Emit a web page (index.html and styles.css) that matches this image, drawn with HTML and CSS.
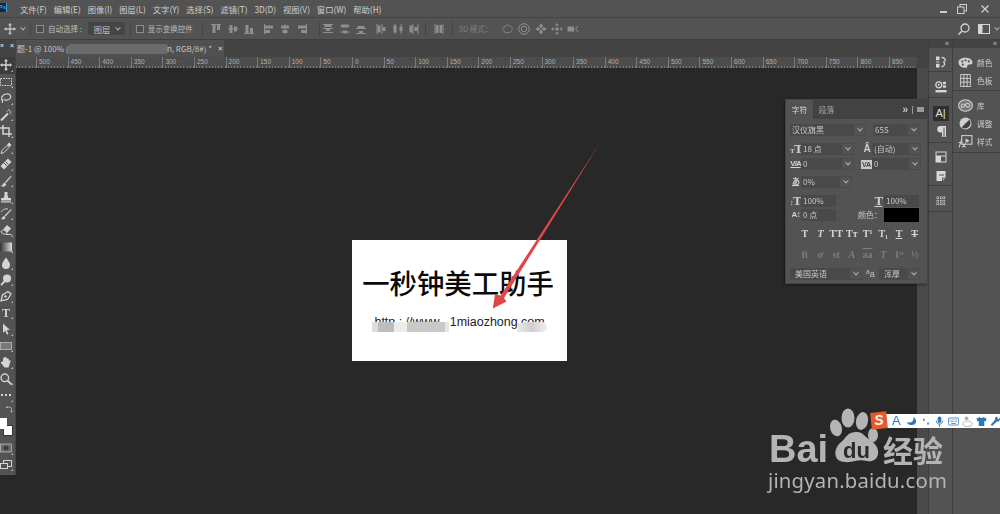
FILE: index.html
```html
<!DOCTYPE html>
<html lang="zh-CN">
<head>
<meta charset="utf-8">
<title>Photoshop</title>
<link rel="stylesheet" href="styles.css">
</head>
<body>
<svg class="sprite" aria-hidden="true">
  <defs>
    <symbol id="move" viewBox="0 0 12 12"><path d="M6 0l2 2.200H6.700v3.100h3.100V4L12 6 9.800 8V6.700H6.700v3.100H8L6 12 4 9.800h1.300V6.700H2.200V8L0 6l2.200-2v1.300h3.100V2.200H4z" fill="currentColor"/></symbol>
    <symbol id="marquee" viewBox="0 0 12 12"><rect x=".5" y="2.500" width="11" height="7" fill="none" stroke="currentColor" stroke-dasharray="1.600 1"/></symbol>
    <symbol id="lasso" viewBox="0 0 12 12"><path d="M2.500 9.500C.5 7 1.500 2.500 6.500 2c4-.4 5 2.500 3.500 4.500S5 8.500 3.500 7.500" fill="none" stroke="currentColor" stroke-width="1.200"/><path d="M2.500 7.500v3.500" stroke="currentColor"/></symbol>
    <symbol id="wand" viewBox="0 0 12 12"><path d="M1 11.500L8 4.500" stroke="currentColor" stroke-width="2"/><path d="M9 0v2M11.500 3H9.500M11 5.500l-1-1M6.500 1.500l1 1" stroke="currentColor"/></symbol>
    <symbol id="crop" viewBox="0 0 12 12"><path d="M3 0v9h9M0 3h9v9" fill="none" stroke="currentColor" stroke-width="1.500"/></symbol>
    <symbol id="dropper" viewBox="0 0 12 12"><path d="M1 11.500l1-3L7 3.500l2 2-5 5z" fill="none" stroke="currentColor"/><path d="M7 2.500l2-2 2.500 2.500-2 2z" fill="currentColor"/></symbol>
    <symbol id="heal" viewBox="0 0 12 12"><path d="M.5 8l7.500-7.500 3.500 3.500L4 11.500z" fill="currentColor"/><path d="M4 5l3 3M5.500 3.500l3 3" stroke="#535353"/></symbol>
    <symbol id="brush" viewBox="0 0 12 12"><path d="M11 .5L5 7l1 1 5.500-6.500z" fill="currentColor"/><path d="M4.500 7.500C2.500 8 3.500 10.500 .5 11c3.500 1.500 6-.5 5.500-2z" fill="currentColor"/></symbol>
    <symbol id="stamp" viewBox="0 0 12 12"><path d="M4.500 1h3v3.500L8.500 7h2.500v2.500H1V7h2.500l1-2.500z" fill="currentColor"/><rect x="1" y="10.300" width="10" height="1.200" fill="currentColor"/></symbol>
    <symbol id="history" viewBox="0 0 12 12"><path d="M11 1L4.500 7.500l1 1L11.500 2z" fill="currentColor"/><path d="M4 8c-2 .5-1 2.500-3.500 3 3 1 5 0 5-1.700z" fill="currentColor"/><path d="M1 4c2-3 5-3.500 7-3" fill="none" stroke="currentColor"/></symbol>
    <symbol id="eraser" viewBox="0 0 12 12"><path d="M7 1l4 3.500-3.500 4L3.500 5z" fill="currentColor"/><path d="M3 5.500L.8 8l2.500 2h2.500l1.500-1.500z" fill="none" stroke="currentColor"/><path d="M6 10.500h5.500" stroke="currentColor"/></symbol>
    <symbol id="gradient" viewBox="0 0 12 12"><defs><linearGradient id="g1"><stop offset="0" stop-color="#333"/><stop offset="1" stop-color="#ddd"/></linearGradient></defs><rect y="1.500" width="12" height="9" fill="url(#g1)"/></symbol>
    <symbol id="drop" viewBox="0 0 12 12"><path d="M6 .5C8 3.500 10 5.500 10 8a4 4 0 0 1-8 0C2 5.500 4 3.500 6 .5z" fill="currentColor"/></symbol>
    <symbol id="dodge" viewBox="0 0 12 12"><circle cx="7" cy="4.500" r="4" fill="currentColor"/><path d="M4.500 7.500L1 11" stroke="currentColor" stroke-width="1.800"/></symbol>
    <symbol id="pen" viewBox="0 0 12 12"><path d="M1 11l1.500-6L8 1.500 11 4 7.500 9.500z" fill="none" stroke="currentColor" stroke-width="1.300"/><circle cx="5.500" cy="6.500" r="1.200" fill="currentColor"/></symbol>
    <symbol id="path" viewBox="0 0 12 12"><path d="M3 .5l7 6.500H6.800L8.500 11l-1.500.7L5.200 7.800 3 10z" fill="currentColor"/></symbol>
    <symbol id="shape" viewBox="0 0 12 12"><rect x=".5" y="2.500" width="11" height="7" fill="#777" stroke="#aaa"/></symbol>
    <symbol id="hand" viewBox="0 0 12 12"><path d="M3 5V2.500a.8.8 0 0 1 1.300-.3V1.300a.8.8 0 0 1 1.500 0V2a.8.8 0 0 1 1.500 0v1a.8.8 0 0 1 1.500 0v2l.7-.7c.7-.5 1.400.2 1 .9L8.500 11.500H4.500L1 7c-.5-.8.500-1.500 1.200-.9z" fill="currentColor"/></symbol>
    <symbol id="zoom" viewBox="0 0 12 12"><circle cx="4.800" cy="4.800" r="3.800" fill="none" stroke="currentColor" stroke-width="1.300"/><path d="M7.500 7.500l4 4" stroke="currentColor" stroke-width="1.800"/></symbol>
    <symbol id="dots" viewBox="0 0 12 12"><path d="M1 6h2M5 6h2M9 6h2" stroke="currentColor" stroke-width="1.800"/></symbol>
    <symbol id="swap" viewBox="0 0 12 12"><path d="M1 2h5.500a3 3 0 0 1 3 3v4" fill="none" stroke="currentColor"/><path d="M2.500 0L0 2l2.500 2zM7.500 8.500L9.500 11l2-2.500z" fill="currentColor"/></symbol>
    <symbol id="mask" viewBox="0 0 12 12"><rect x=".5" y="2" width="11" height="8" fill="#6a6a6a" stroke="currentColor" stroke-width=".6"/><circle cx="6" cy="6" r="2.500" fill="#3d3d3d"/></symbol>
    <symbol id="screen" viewBox="0 0 12 12"><rect x="3.500" y="1.500" width="8" height="6" fill="none" stroke="currentColor"/><rect x=".5" y="4.500" width="7" height="5" fill="#535353" stroke="currentColor"/></symbol>
    <symbol id="a-top" viewBox="0 0 12 12"><path d="M1 1.500h10" stroke="currentColor"/><rect x="2.500" y="2" width="3" height="8" fill="currentColor"/><rect x="7" y="2" width="3" height="5" fill="currentColor"/></symbol>
    <symbol id="a-mid" viewBox="0 0 12 12"><path d="M1 6h10" stroke="currentColor"/><rect x="2.500" y="2" width="3" height="8" fill="currentColor"/><rect x="7" y="3.500" width="3" height="5" fill="currentColor"/></symbol>
    <symbol id="a-bot" viewBox="0 0 12 12"><path d="M1 10.500h10" stroke="currentColor"/><rect x="2.500" y="2" width="3" height="8" fill="currentColor"/><rect x="7" y="5" width="3" height="5" fill="currentColor"/></symbol>
    <symbol id="a-left" viewBox="0 0 12 12"><path d="M1.500 1v10" stroke="currentColor"/><rect x="2" y="2.500" width="8" height="3" fill="currentColor"/><rect x="2" y="7" width="5" height="3" fill="currentColor"/></symbol>
    <symbol id="a-cen" viewBox="0 0 12 12"><path d="M6 1v10" stroke="currentColor"/><rect x="2" y="2.500" width="8" height="3" fill="currentColor"/><rect x="3.500" y="7" width="5" height="3" fill="currentColor"/></symbol>
    <symbol id="a-right" viewBox="0 0 12 12"><path d="M10.500 1v10" stroke="currentColor"/><rect x="2" y="2.500" width="8" height="3" fill="currentColor"/><rect x="5" y="7" width="5" height="3" fill="currentColor"/></symbol>
    <symbol id="d-top" viewBox="0 0 12 12"><path d="M1 1.500h10M1 5.500h10M1 9.500h10" stroke="currentColor"/><rect x="2.500" y="2" width="7" height="2" fill="currentColor"/><rect x="4" y="6" width="4" height="2" fill="currentColor"/></symbol>
    <symbol id="d-mid" viewBox="0 0 12 12"><path d="M1 3h10M1 9h10" stroke="currentColor"/><rect x="2.500" y="1.500" width="7" height="3" fill="currentColor"/><rect x="4" y="7.500" width="4" height="3" fill="currentColor"/></symbol>
    <symbol id="d-bot" viewBox="0 0 12 12"><path d="M1 5.500h10M1 10.500h10" stroke="currentColor"/><rect x="2.500" y="3" width="7" height="2" fill="currentColor"/><rect x="4" y="8" width="4" height="2" fill="currentColor"/></symbol>
    <symbol id="d-l" viewBox="0 0 12 12"><path d="M2 1v10M7 1v10" stroke="currentColor"/><rect x="2.500" y="2.500" width="3" height="7" fill="currentColor"/><rect x="7.500" y="4" width="3" height="4" fill="currentColor"/></symbol>
    <symbol id="d-c" viewBox="0 0 12 12"><path d="M3 1v10M9 1v10" stroke="currentColor"/><rect x="1.500" y="2.500" width="3" height="7" fill="currentColor"/><rect x="7.500" y="4" width="3" height="4" fill="currentColor"/></symbol>
    <symbol id="d-r" viewBox="0 0 12 12"><path d="M5 1v10M10 1v10" stroke="currentColor"/><rect x="1.500" y="2.500" width="3" height="7" fill="currentColor"/><rect x="6.500" y="4" width="3" height="4" fill="currentColor"/></symbol>
    <symbol id="d-v" viewBox="0 0 12 12"><path d="M2 1v10M10 1v10" stroke="currentColor"/><rect x="3" y="2" width="2.500" height="8" fill="currentColor"/><rect x="6.500" y="2" width="2.500" height="8" fill="currentColor"/></symbol>
    <symbol id="orbit" viewBox="0 0 14 12"><path d="M3 8c-3-1-3-4 0-4 .5-3 5-3.500 6-1 3 0 4 2.500 2 4" fill="none" stroke="currentColor"/><path d="M2 9c3 2 7 2 10-1" fill="none" stroke="currentColor"/></symbol>
    <symbol id="roll" viewBox="0 0 12 12"><circle cx="6" cy="6" r="5.300" fill="none" stroke="currentColor"/><circle cx="6" cy="6" r="2.800" fill="none" stroke="currentColor"/></symbol>
    <symbol id="pan3d" viewBox="0 0 12 12"><path d="M6 .5L8 3 6 5.500 4 3zM6 6.500L8 9l-2 2.500L4 9zM.5 6L3 4l2.500 2L3 8zM6.500 6L9 4l2.500 2L9 8z" fill="currentColor"/></symbol>
    <symbol id="slide" viewBox="0 0 12 12"><path d="M6 0l2 2.500H4zM6 12L4 9.500h4zM0 6l2.500-2v4zM12 6L9.500 8V4z" fill="currentColor"/><circle cx="6" cy="6" r="1.800" fill="currentColor"/></symbol>
    <symbol id="cam" viewBox="0 0 12 12"><rect x=".5" y="3.500" width="6.500" height="5" fill="currentColor"/><path d="M11 3L8.500 6l2.500 3" fill="none" stroke="currentColor"/></symbol>
    <symbol id="search" viewBox="0 0 12 12"><circle cx="7" cy="5" r="4" fill="none" stroke="currentColor" stroke-width="1.300"/><path d="M4 8l-3.500 3.500" stroke="currentColor" stroke-width="1.500"/></symbol>
    <symbol id="layout" viewBox="0 0 12 12"><rect x=".5" y="1.500" width="11" height="9" fill="none" stroke="currentColor"/><rect x="1" y="2" width="3.500" height="8" fill="currentColor"/></symbol>
    <symbol id="minimize" viewBox="0 0 12 12"><rect x="2" y="8" width="7" height="2" fill="currentColor"/></symbol>
    <symbol id="restore" viewBox="0 0 12 12"><rect x="4" y="1.500" width="6.500" height="6.500" fill="none" stroke="currentColor"/><rect x="1.500" y="4" width="6.500" height="6.500" fill="#535353" stroke="currentColor"/></symbol>
    <symbol id="close" viewBox="0 0 12 12"><path d="M2.500 2.500l7 7M9.500 2.500l-7 7" stroke="currentColor" stroke-width="1.300"/></symbol>
    <symbol id="d-hist" viewBox="0 0 12 12"><rect x="1" y=".5" width="3.500" height="3.500" fill="currentColor"/><rect x="1" y="4.500" width="3.500" height="3" fill="#8a8a8a"/><rect x="1" y="8" width="3.500" height="3.500" fill="currentColor"/><path d="M6.500 1.500c3.500 0 4.500 2 3 4.200M8 5.800c2.500 1 2.300 4-1.500 5" fill="none" stroke="currentColor" stroke-width="1.300"/></symbol>
    <symbol id="d-info" viewBox="0 0 12 12"><circle cx="3.800" cy="3.800" r="3" fill="none" stroke="currentColor" stroke-width="1.300"/><circle cx="3.800" cy="3.800" r="1" fill="currentColor"/><rect x="8" y=".8" width="3" height="2.400" fill="currentColor"/><rect x="8" y="4.300" width="3" height="2.400" fill="currentColor"/><rect x=".5" y="9" width="11" height="2.400" fill="currentColor"/></symbol>
    <symbol id="d-para" viewBox="0 0 12 12"><path d="M11 1H5.500a3 3 0 0 0 0 6.500H7V12h1.500V2.500H9.500V12H11z" fill="currentColor"/></symbol>
    <symbol id="d-grid" viewBox="0 0 12 12"><rect x="1" y="1" width="10" height="10" fill="none" stroke="currentColor"/><path d="M1 5h10" stroke="currentColor"/><rect x="1" y="5" width="5" height="6" fill="currentColor"/></symbol>
    <symbol id="d-page" viewBox="0 0 12 12"><path d="M1.500 1h9v7L7.500 11h-6z" fill="currentColor"/><path d="M4 5h5M7.500 11V8H10.500" fill="none" stroke="#535353"/></symbol>
    <symbol id="d-net" viewBox="0 0 12 12"><path d="M1 3h10M1 6h10M1 9h10M3 1v10M6 1v10M9 1v10" stroke="currentColor" stroke-dasharray="1.200 .8"/></symbol>
    <symbol id="palette" viewBox="0 0 14 12"><path d="M7 1.500c4 0 6.500 2 6.500 4.500s-2.500 1.500-4 2 0 3-2.500 3C3.500 11 .5 9 .5 6S3 1.500 7 1.500z" fill="currentColor"/><circle cx="4" cy="5" r="1" fill="#535353"/><circle cx="7" cy="4" r="1" fill="#535353"/><circle cx="10" cy="5" r="1" fill="#535353"/><circle cx="4.500" cy="8" r="1" fill="#535353"/></symbol>
    <symbol id="swatches" viewBox="0 0 12 12"><path d="M1.500 .5h9v11h-9zM4.500.5v11M7.500.5v11M1.500 4h9M1.500 7.500h9" fill="none" stroke="currentColor" stroke-width=".9"/></symbol>
    <symbol id="cc" viewBox="0 0 14 12"><ellipse cx="7" cy="6" rx="6.500" ry="5.300" fill="#777" stroke="currentColor"/><path d="M3 7c0-3 3-3 4-1s4 2 4 0-3-3-4-1-4 4-4 2z" fill="none" stroke="currentColor"/></symbol>
    <symbol id="adjust" viewBox="0 0 12 12"><circle cx="6" cy="6" r="5.500" fill="currentColor"/><path d="M9.500 2.500A5 5 0 0 1 2.500 9.500z" fill="#3f3f3f"/></symbol>
    <symbol id="fx" viewBox="0 0 14 12"><rect x="3.500" y=".5" width="9.500" height="8" fill="none" stroke="currentColor"/><path d="M7 3l4 2.500-4 2z" fill="currentColor"/><path d="M1 11.500L3.500 4M.5 7H4M4 8l3 3.500M7 8l-3 3.500" stroke="currentColor"/></symbol>
    <symbol id="moon" viewBox="0 0 12 12"><path d="M8 1c1 4-2 7-7 6 2 4 10 4 10-1 0-2-1-4-3-5z" fill="currentColor"/></symbol>
    <symbol id="commas" viewBox="0 0 12 12"><path d="M3.500 3a1.200 1.200 0 1 1 0 2.200zM8 7a1.200 1.200 0 1 1 0 2.200z" fill="currentColor"/></symbol>
    <symbol id="mic" viewBox="0 0 12 12"><rect x="4" y=".5" width="4" height="7" rx="2" fill="currentColor"/><path d="M2.500 5c0 5 7 5 7 0M6 9v3" fill="none" stroke="currentColor"/></symbol>
    <symbol id="keys" viewBox="0 0 14 12"><rect x=".5" y="1.500" width="13" height="9" rx="1" fill="none" stroke="currentColor"/><path d="M2 4h10M2 6h10" stroke="currentColor" stroke-dasharray="1 .7"/><path d="M4 8.500h6" stroke="currentColor"/></symbol>
    <symbol id="person" viewBox="0 0 12 12"><circle cx="5" cy="2.500" r="2" fill="currentColor"/><ellipse cx="6" cy="8.500" rx="5" ry="3" fill="none" stroke="currentColor"/></symbol>
    <symbol id="shirt" viewBox="0 0 12 12"><path d="M4 1L.5 3l1 3 1.500-.5V11h6V5.500l1.500.5 1-3L8 1C7.500 2.500 4.500 2.500 4 1z" fill="currentColor"/></symbol>
    <symbol id="wrench" viewBox="0 0 12 12"><path d="M11 1.500L9 3.500 8 3 8.500 1C6.500.3 5 2 5.500 4L.8 9.500l1.500 1.500L7.500 6c2 .5 4-1.500 3.500-4.500z" fill="currentColor"/></symbol>
  </defs>
</svg>

<div class="app">
  <header class="menubar">
    <span class="ps-logo">Ps</span>
    <nav class="menu">
      <span>文件(F)</span><span>编辑(E)</span><span>图像(I)</span><span>图层(L)</span><span>文字(Y)</span><span>选择(S)</span><span>滤镜(T)</span><span>3D(D)</span><span>视图(V)</span><span>窗口(W)</span><span>帮助(H)</span>
    </nav>
    <div class="winctl">
      <svg class="wbtn"><use href="#minimize"/></svg>
      <svg class="wbtn"><use href="#restore"/></svg>
      <svg class="wbtn wclose"><use href="#close"/></svg>
    </div>
  </header>

  <div class="optbar">
    <svg class="opt-move"><use href="#move"/></svg>
    <i class="chev opt-chev"></i>
    <i class="vsep"></i>
    <i class="check"></i>
    <span class="opt-label">自动选择 :</span>
    <div class="opt-combo"><span>图层</span><i class="chev"></i></div>
    <i class="vsep sep-b"></i>
    <i class="check"></i>
    <span class="opt-label">显示变换控件</span>
    <i class="vsep sep-c"></i>
    <div class="ogroup g1">
      <svg><use href="#a-top"/></svg><svg><use href="#a-mid"/></svg><svg><use href="#a-bot"/></svg>
      <svg class="gapl"><use href="#a-left"/></svg><svg><use href="#a-cen"/></svg><svg><use href="#a-right"/></svg>
    </div>
    <i class="vsep sep-d"></i>
    <div class="ogroup">
      <svg><use href="#d-top"/></svg><svg><use href="#d-mid"/></svg><svg><use href="#d-bot"/></svg>
      <svg class="gapl"><use href="#d-l"/></svg><svg><use href="#d-c"/></svg><svg><use href="#d-r"/></svg>
    </div>
    <i class="vsep sep-e"></i>
    <div class="ogroup"><svg><use href="#d-v"/></svg></div>
    <i class="vsep sep-f"></i>
    <span class="mode3d">3D 模式：</span>
    <div class="ogroup g3d">
      <svg><use href="#orbit"/></svg><svg><use href="#roll"/></svg><svg><use href="#pan3d"/></svg><svg><use href="#slide"/></svg><svg><use href="#cam"/></svg>
    </div>
    <div class="opt-right">
      <svg class="r-search"><use href="#search"/></svg>
      <svg class="r-layout"><use href="#layout"/></svg>
      <i class="chev"></i>
    </div>
  </div>

  <div class="workspace">
    <aside class="toolcol">
      <div class="toolbox">
        <div class="tool-head"><span>»</span><span>×</span></div>
        <div class="tool active"><svg><use href="#move"/></svg></div>
        <div class="tool"><svg><use href="#marquee"/></svg></div>
        <div class="tool"><svg><use href="#lasso"/></svg></div>
        <div class="tool"><svg><use href="#wand"/></svg></div>
        <div class="tool"><svg><use href="#crop"/></svg></div>
        <div class="tool"><svg><use href="#dropper"/></svg></div>
        <div class="tool"><svg><use href="#heal"/></svg></div>
        <div class="tool"><svg><use href="#brush"/></svg></div>
        <div class="tool"><svg><use href="#stamp"/></svg></div>
        <div class="tool"><svg><use href="#history"/></svg></div>
        <div class="tool"><svg><use href="#eraser"/></svg></div>
        <div class="tool"><svg><use href="#gradient"/></svg></div>
        <div class="tool"><svg><use href="#drop"/></svg></div>
        <div class="tool"><svg><use href="#dodge"/></svg></div>
        <div class="tool"><svg><use href="#pen"/></svg></div>
        <div class="tool tool-t">T</div>
        <div class="tool"><svg><use href="#path"/></svg></div>
        <div class="tool"><svg><use href="#shape"/></svg></div>
        <div class="tool"><svg><use href="#hand"/></svg></div>
        <div class="tool"><svg><use href="#zoom"/></svg></div>
        <div class="tool"><svg><use href="#dots"/></svg></div>
        <div class="colors"><svg class="col-swap"><use href="#swap"/></svg><i class="col-fg"></i><i class="col-bg"></i></div>
        <div class="tool"><svg><use href="#mask"/></svg></div>
        <div class="tool"><svg><use href="#screen"/></svg></div>
      </div>
    </aside>

    <main class="center">
      <div class="tabbar">
        <div class="doctab">
          <span>题-1 @ 100% (I</span><i class="tab-blur"></i><span>n, RGB/8#) *</span><span class="tab-x">×</span>
        </div>
      </div>
      <div class="ruler">
        <span>500</span><span>450</span><span>400</span><span>350</span><span>300</span><span>250</span><span>200</span><span>150</span><span>100</span><span>50</span><span>0</span><span>50</span><span>100</span><span>150</span><span>200</span><span>250</span><span>300</span><span>350</span><span>400</span><span>450</span><span>500</span><span>550</span><span>600</span><span>650</span><span>700</span><span>750</span><span>800</span><span>850</span>
      </div>
      <div class="stage">
        <div class="doc">
          <div class="doc-title">一秒钟美工助手</div>
          <div class="doc-url">http : //www . 1miaozhong.com</div>
          <i class="mosaic m1"></i><i class="mosaic m2"></i>
        </div>
        <svg class="arrow" viewBox="16 68 901 446">
          <path d="M600 143L504 298 506.500 301.500 492.800 308.500 495 294.500 500.500 295.500z" fill="#e04646"/>
        </svg>
      </div>
    </main>

    <div class="gutter"></div>

    <aside class="dock dock-a">
      <div class="dock-head">«</div>
      <div class="dock-sec sec0"><svg><use href="#d-hist"/></svg></div>
      <div class="dock-sec sec1"><svg><use href="#d-info"/></svg></div>
      <div class="dock-sec sec2"><div class="dock-a-btn">A|</div><svg><use href="#d-para"/></svg></div>
      <div class="dock-sec sec3"><svg><use href="#d-grid"/></svg><svg><use href="#d-page"/></svg></div>
      <div class="dock-sec sec4"><svg><use href="#d-net"/></svg></div>
    </aside>

    <aside class="dock dock-b">
      <div class="dock-head">«</div>
      <div class="dock-group grp1">
        <div class="dock-item"><svg><use href="#palette"/></svg><span>颜色</span></div>
        <div class="dock-item"><svg><use href="#swatches"/></svg><span>色板</span></div>
      </div>
      <div class="dock-group grp2">
        <div class="dock-item"><svg><use href="#cc"/></svg><span>库</span></div>
        <div class="dock-item"><svg><use href="#adjust"/></svg><span>调整</span></div>
        <div class="dock-item"><svg><use href="#fx"/></svg><span>样式</span></div>
      </div>
    </aside>
  </div>

  <section class="charpanel">
    <div class="cp-tabs">
      <span class="cp-tab on">字符</span><span class="cp-tab">段落</span>
      <span class="cp-more">»</span><i class="cp-bar"></i><i class="cp-menu"></i>
    </div>
    <div class="cp-row r1">
      <div class="combo w76"><span>汉仪旗黑</span><i class="chev"></i></div>
      <div class="combo w47"><span>65S</span><i class="chev"></i></div>
    </div>
    <div class="cp-row r2">
      <b class="cp-ico big"><small>T</small>T</b>
      <div class="combo w53"><span>18 点</span><i class="chev"></i></div>
      <b class="cp-ico ml18 leading">Â</b>
      <div class="combo w49"><span>(自动)</span><i class="chev"></i></div>
    </div>
    <div class="cp-row r3">
      <b class="cp-ico under">V/A</b>
      <div class="combo w53"><span>0</span><i class="chev"></i></div>
      <b class="cp-ico ml18 boxed">VA</b>
      <div class="combo w49"><span>0</span><i class="chev"></i></div>
    </div>
    <div class="cp-row r4">
      <b class="cp-ico under">あ</b>
      <div class="combo w51"><span>0%</span><i class="chev"></i></div>
    </div>
    <div class="cp-row r5">
      <b class="cp-ico big"><small>↕</small>T</b>
      <div class="field w35">100%</div>
      <b class="cp-ico ml48 big under">T</b>
      <div class="field w35">100%</div>
    </div>
    <div class="cp-row r6">
      <b class="cp-ico">A↕</b>
      <div class="field w35">0 点</div>
      <span class="cp-color">颜色：</span>
      <i class="swatch"></i>
    </div>
    <div class="cp-glyphs g-a">
      <span>T</span><span class="it">T</span><span>TT</span><span>Tт</span><span>T¹</span><span>T₁</span><span class="ul">T</span><span class="st">T</span>
    </div>
    <div class="cp-glyphs g-b">
      <span>fi</span><span class="it">ơ</span><span>st</span><span class="it">A</span><span class="ul-o">aa</span><span class="it">T</span><span>1ˢᵗ</span><span>½</span>
    </div>
    <div class="cp-row r9">
      <div class="combo w72"><span class="ind">美国英语</span><i class="chev"></i></div>
      <span class="cp-aa">ªa</span>
      <div class="combo w41"><span class="ind">浑厚</span><i class="chev"></i></div>
    </div>
  </section>

  <div class="watermark">
    <svg class="paw" viewBox="828 408 56 60">
      <ellipse cx="836" cy="428" rx="5.800" ry="8.500" transform="rotate(-15 836 428)" fill="#b4b4b4"/>
      <ellipse cx="848" cy="418" rx="6.500" ry="9.500" fill="#b4b4b4"/>
      <ellipse cx="862" cy="421" rx="6" ry="9" transform="rotate(12 862 421)" fill="#b4b4b4"/>
      <ellipse cx="873" cy="435" rx="5" ry="7" fill="#b4b4b4"/>
      <path d="M857 432c6 0 8 5 13 8s9 8 8 14-6 8-11 7-8-1-12 0-10 2-15 0-6-9-3-14 5-5 8-9 6-6 12-6z" fill="#b4b4b4"/>
    </svg>
    <span class="wm-bai">Bai</span>
    <span class="wm-du">du</span>
    <span class="wm-cn">经验</span>
    <span class="wm-url">jingyan.baidu.com</span>
  </div>

  <div class="ime">
    <span class="ime-s">S</span>
    <span class="ime-a">A</span>
    <svg><use href="#moon"/></svg>
    <svg><use href="#commas"/></svg>
    <svg><use href="#mic"/></svg>
    <svg><use href="#keys"/></svg>
    <svg class="ime-grey"><use href="#person"/></svg>
    <svg><use href="#shirt"/></svg>
    <svg><use href="#wrench"/></svg>
  </div>
</div>
</body>
</html>
```

FILE: styles.css
```css
* { box-sizing: border-box; }
html, body { margin: 0; height: 100%; background: #282828; overflow: hidden; }
.sprite { position: absolute; width: 0; height: 0; }
i { display: block; }

.app {
  position: relative;
  display: flex;
  flex-direction: column;
  width: 1000px;
  height: 514px;
  overflow: hidden;
  font-family: "Noto Sans CJK SC", "Noto Sans", sans-serif;
  color: #c9c9c9;
  filter: blur(.4px);
}

.chev {
  width: 4px;
  height: 4px;
  border-right: 1px solid #b8b8b8;
  border-bottom: 1px solid #b8b8b8;
  transform: rotate(45deg) translate(-1px, -1px);
  flex: none;
}

/* menu */
.menubar {
  display: flex;
  align-items: center;
  flex: none;
  height: 18px;
  background: #535353;
  border-bottom: 1px solid #454545;
}
.ps-logo {
  width: 7px;
  height: 9px;
  margin-top: -2px;
  background: #0e2a45;
  color: #3fa0e8;
  font: 700 6px/9px "Liberation Sans", sans-serif;
  direction: rtl;
  overflow: hidden;
  border-right: 1px solid #3fa0e8;
}
.menu {
  display: flex;
  gap: 6.900px;
  margin-left: 13px;
  font-size: 8.300px;
  line-height: 16px;
  color: #cfcfcf;
  white-space: nowrap;
}
.winctl { display: flex; margin-left: auto; align-items: center; color: #cfcfcf; }
.wbtn { width: 12px; height: 12px; margin-right: 6px; }
.wclose { margin: 0 9px 0 5px; }

/* options */
.optbar {
  display: flex;
  align-items: center;
  flex: none;
  height: 22px;
  padding-left: 4px;
  background: #535353;
  border-bottom: 1px solid #3e3e3e;
  color: #c4c4c4;
  font-size: 8.300px;
  white-space: nowrap;
}
.optbar svg { width: 12px; height: 12px; flex: none; }
.opt-chev { margin-left: 5px; }
.vsep { width: 1px; height: 14px; background: #454545; flex: none; margin-left: 5px; }
.check { width: 8px; height: 8px; margin-left: 5px; border: 1px solid #8c8c8c; background: #4b4b4b; flex: none; }
.opt-label { margin-left: 4px; color: #bdbdbd; font-size: 7.500px; }
.opt-combo {
  display: flex;
  align-items: center;
  justify-content: space-between;
  width: 37px;
  height: 13px;
  margin-left: 6px;
  padding: 0 5px 0 6px;
  background: #454545;
  border-radius: 2px;
}
.sep-b { margin-left: 5px; }
.sep-c { margin-left: 9px; }
.ogroup { display: flex; flex: none; color: #8f8f8f; }
.ogroup svg { margin: 0 2.250px; }
.ogroup .gapl { margin-left: 5.500px; }
.g1 { margin-left: 5px; }
.sep-d { margin-left: 9px; }
.sep-e { margin-left: 3px; }
.sep-f { margin-left: 5px; }
.sep-e + .ogroup { margin-left: 4px; }
.mode3d { margin-left: 6px; color: #7f7f7f; font-size: 7.500px; width: 38px; }
.g3d svg { margin: 0 2.200px; }
.g3d { margin-left: 3px; }
.opt-right { display: flex; align-items: center; margin-left: auto; padding-right: 1px; }
.r-search { color: #d5d5d5; margin-right: 8px; }
.r-layout { color: #d5d5d5; margin-right: 5px; }

/* workspace */
.workspace { display: flex; flex: 1; min-height: 0; }
.toolcol { flex: none; width: 16px; }
.toolbox {
  display: flex;
  flex-direction: column;
  height: 435px;
  background: #535353;
  border-right: 1px solid #444;
  color: #d4d4d4;
}
.tool-head {
  display: flex;
  justify-content: space-between;
  height: 17px;
  padding: 1px 1px 0 0;
  background: #434343;
  font: 700 7px/9px "Liberation Sans", sans-serif;
}
.tool {
  position: relative;
  display: flex;
  align-items: center;
  justify-content: center;
  height: 16.500px;
  flex: none;
  padding-right: 3px;
}
.tool::after {
  content: "";
  position: absolute;
  right: 2px;
  bottom: 2px;
  border-left: 2px solid transparent;
  border-bottom: 2px solid #bbb;
}
.tool svg { width: 12px; height: 12px; }
.tool.active { background: #3c3c3c; }
.tool-t { font: 700 12px/1 "Liberation Serif", serif; }
.colors { position: relative; height: 36.500px; flex: none; }
.col-swap { position: absolute; left: 6px; top: 2px; width: 7px; height: 7px; }
.col-fg, .col-bg { position: absolute; background: #fff; }
.col-fg { left: 0; top: 14px; width: 7px; height: 11px; z-index: 1; }
.col-bg { left: 3px; top: 21px; width: 10px; height: 11px; border: 1px solid #333; }

/* center */
.center { display: flex; flex-direction: column; flex: none; width: 901px; }
.tabbar { display: flex; height: 17px; flex: none; background: #434343; }
.doctab {
  display: flex;
  align-items: center;
  width: 208px;
  padding-left: 1px;
  background: #505050;
  font-size: 8px;
  color: #c4c4c4;
  white-space: nowrap;
}
.tab-blur { width: 100px; height: 10px; background: #6b6b6b; margin: 0 -1px 0 -3px; flex: none; border-radius: 3px; }
.tab-x { margin-left: 6px; font: 700 8px "Liberation Sans", sans-serif; }
.ruler {
  display: flex;
  flex: none;
  height: 11px;
  padding-left: 20px;
  background-color: #4c4c4c;
  background-image: repeating-linear-gradient(90deg, #7a7a7a 0 1px, transparent 1px 3.160px);
  background-size: 100% 2px;
  background-repeat: no-repeat;
  background-position: 0 100%;
  overflow: hidden;
}
.ruler span {
  flex: 0 0 31.600px;
  padding-left: 2px;
  border-left: 1px solid #7a7a7a;
  font: 6.500px/10px "Liberation Sans", sans-serif;
  color: #b0b0b0;
}
.stage {
  position: relative;
  flex: 1;
  padding: 172px 0 0 336px;
  background: #282828;
}
.doc {
  position: relative;
  display: flex;
  flex-direction: column;
  align-items: center;
  width: 215px;
  height: 121px;
  padding-top: 23px;
  background: #fff;
}
.doc-title { margin-left: -3px; font-size: 27.400px; font-weight: 500; line-height: 38px; color: #0a0a0a; white-space: nowrap; }
.doc-url {
  margin-top: 12px;
  font: 12.450px/18px "Liberation Sans", sans-serif;
  color: #222;
  white-space: nowrap;
}
.mosaic { position: absolute; top: 82px; height: 10px; }
.m1 {
  left: 20px;
  width: 77px;
  background: linear-gradient(90deg, #ddd 0 8%, #bdbdbd 8% 28%, #ececec 28% 45%, #c9c9c9 45% 95%, #e6e6e6 95%);
}
.m2 { left: 165px; width: 30px; border-radius: 8px 5px 5px 0; background: linear-gradient(90deg, #e8e8e8, #cfcfcf 50%, #efefef); }
.arrow { position: absolute; left: 0; top: 0; width: 901px; height: 446px; pointer-events: none; }

/* docks */
.gutter { flex: none; width: 11px; background: linear-gradient(#434343 0 28px, #4a4a4a 28px); }
.dock { flex: none; display: flex; flex-direction: column; background: #535353; }
.dock-a { width: 25px; border-left: 1px solid #3f3f3f; border-right: 1px solid #3f3f3f; align-items: stretch; color: #d8d8d8; }
.dock-b { flex: 1; color: #cfcfcf; background: #535353; }
.dock-head {
  height: 8px;
  flex: none;
  background: #434343;
  font: 700 7px/7px "Liberation Sans", sans-serif;
  text-align: right;
  padding-right: 3px;
  color: #aaa;
}
.dock-sec {
  display: flex;
  flex-direction: column;
  align-items: center;
  border-bottom: 1px solid #3f3f3f;
}
.dock-sec svg { width: 12px; height: 12px; flex: none; }
.sec0 { height: 24px; padding-top: 8px; }
.sec1 { height: 26px; padding-top: 9px; }
.sec2 { height: 45px; padding-top: 8px; }
.sec2 svg { margin-top: 4px; }
.dock-a-btn {
  width: 16px;
  height: 15px;
  background: #2f2f2f;
  text-align: center;
  font: 11px/15px "Liberation Sans", sans-serif;
  color: #e0e0e0;
}
.sec3 { height: 43px; padding-top: 8px; gap: 7px; }
.sec4 { height: 26px; padding-top: 9px; }
.dock-group { display: flex; flex-direction: column; gap: 6px; padding-left: 5px; border-bottom: 1px solid #3f3f3f; }
.grp1 { padding-top: 8px; padding-bottom: 4px; }
.grp2 { padding-top: 8px; padding-bottom: 5px; }
.dock-item { display: flex; align-items: center; gap: 4px; height: 12px; font-size: 7.700px; }
.dock-item svg { width: 15px; height: 13px; flex: none; }

/* character panel */
.charpanel {
  position: absolute;
  left: 785px;
  top: 99px;
  width: 143px;
  height: 185px;
  background: #535353;
  border: 1px solid #454545;
  font-size: 8px;
  color: #c8c8c8;
  box-shadow: -1px 1px 2px rgba(0, 0, 0, .35);
}
.cp-tabs { display: flex; align-items: center; height: 19px; background: #424242; font-size: 7.700px; }
.cp-tab { width: 27px; height: 19px; line-height: 19px; text-align: center; color: #a8a8a8; }
.cp-tab.on { background: #535353; color: #d6d6d6; }
.cp-more { margin-left: auto; font: 700 10px "Liberation Sans", sans-serif; }
.cp-bar { width: 1px; height: 8px; margin: 0 4px; background: #999; }
.cp-menu { width: 7px; height: 5px; margin-right: 3px; background: #9a9a9a; }
.cp-row { display: flex; align-items: center; height: 12px; padding-left: 4px; }
.r1 { margin-top: 5px; gap: 7px; }
.r2 { margin-top: 7px; }
.r3 { margin-top: 3px; }
.r4 { margin-top: 6px; }
.r5 { margin-top: 7px; }
.r6 { margin-top: 2px; }
.r9 { margin-top: 6px; }
.combo {
  display: flex;
  align-items: center;
  justify-content: space-between;
  height: 12px;
  padding: 0 4px 0 2px;
  background: linear-gradient(90deg, #494949 0 calc(100% - 12px), #535353 calc(100% - 12px));
  box-shadow: inset 0 0 0 1px #4a4a4a;
  white-space: nowrap;
  line-height: 12px;
  flex: none;
}
.ind { padding-left: 3px; }
.w76 { width: 76px; }
.w47 { width: 47px; }
.w53 { width: 53px; }
.w49 { width: 49px; }
.w51 { width: 51px; }
.w72 { width: 72px; }
.w41 { width: 41px; }
.w35 { width: 35px; }
.field { height: 12px; padding-left: 2px; background: #494949; line-height: 12px; flex: none; }
.cp-ico {
  flex: none;
  width: 11px;
  height: 12px;
  overflow: visible;
  font: 700 8px/12px "Liberation Sans", sans-serif;
  color: #d0d0d0;
  text-align: center;
  white-space: nowrap;
  letter-spacing: -1px;
}
.cp-ico.big { font: 700 13px/12px "Liberation Serif", serif; letter-spacing: -.5px; }
.cp-ico small { font-size: 7px; }
.under { text-decoration: underline; text-underline-offset: 1px; }
.leading { font-size: 10px; }
.ml18 { margin-left: 7px; width: 11px; }
.ml48 { margin-left: 37px; }
.boxed { height: 9px; background: #c8c8c8; color: #444; line-height: 9px; letter-spacing: 0; font-size: 7px; }
.cp-color { margin-left: 12px; width: 36px; text-align: right; padding-right: 2px; line-height: 12px; }
.swatch { width: 35px; height: 14px; background: #000; flex: none; }
.cp-glyphs { display: flex; height: 14px; padding-left: 11px; font: 700 10px/14px "Liberation Serif", serif; }
.cp-glyphs span { flex: 0 0 15.700px; text-align: center; white-space: nowrap; }
.g-a { margin-top: 6px; color: #d6d6d6; }
.g-b { margin-top: 7px; color: #7e7e7e; }
.it { font-style: italic; }
.ul { text-decoration: underline; }
.st { text-decoration: line-through; }
.ul-o { text-decoration: overline; }
.cp-aa { width: 17px; text-align: center; font: 9px/12px "Liberation Sans", sans-serif; }

/* watermark */
.watermark {
  position: absolute;
  left: 768px;
  top: 408px;
  width: 190px;
  height: 90px;
  color: #b4b4b4;
}
.paw { position: absolute; left: 60px; top: 0; width: 56px; height: 60px; }
.wm-bai { position: absolute; left: 1px; top: 19px; font: 700 38px/44px "Liberation Sans", sans-serif; }
.wm-du { position: absolute; left: 75px; top: 31px; font: 700 22px/24px "Liberation Sans", sans-serif; color: #2a2a2a; }
.wm-cn { position: absolute; left: 115px; top: 26px; font-size: 30px; line-height: 30px; font-weight: 700; white-space: nowrap; }
.wm-url { position: absolute; left: 0; top: 60px; font: 20.300px/24px "Noto Sans", sans-serif; letter-spacing: .2px; white-space: nowrap; }

/* input method bar */
.ime {
  position: absolute;
  left: 878px;
  top: 414px;
  display: flex;
  align-items: center;
  width: 122px;
  height: 14px;
  padding-left: 14px;
  background: #fff;
  color: #2b78bd;
}
.ime svg { width: 11px; height: 11px; flex: none; margin-right: 3px; }
.ime-s {
  position: absolute;
  left: -7px;
  top: -2px;
  width: 16px;
  height: 17px;
  background: #e2592a;
  color: #fff;
  text-align: center;
  font: italic 700 14px/17px "Liberation Sans", sans-serif;
  transform: rotate(-6deg);
}
.ime-a { font: 13px/14px "Liberation Sans", sans-serif; margin-right: 5px; }
.ime-grey { color: #a5b0b8; }
```
